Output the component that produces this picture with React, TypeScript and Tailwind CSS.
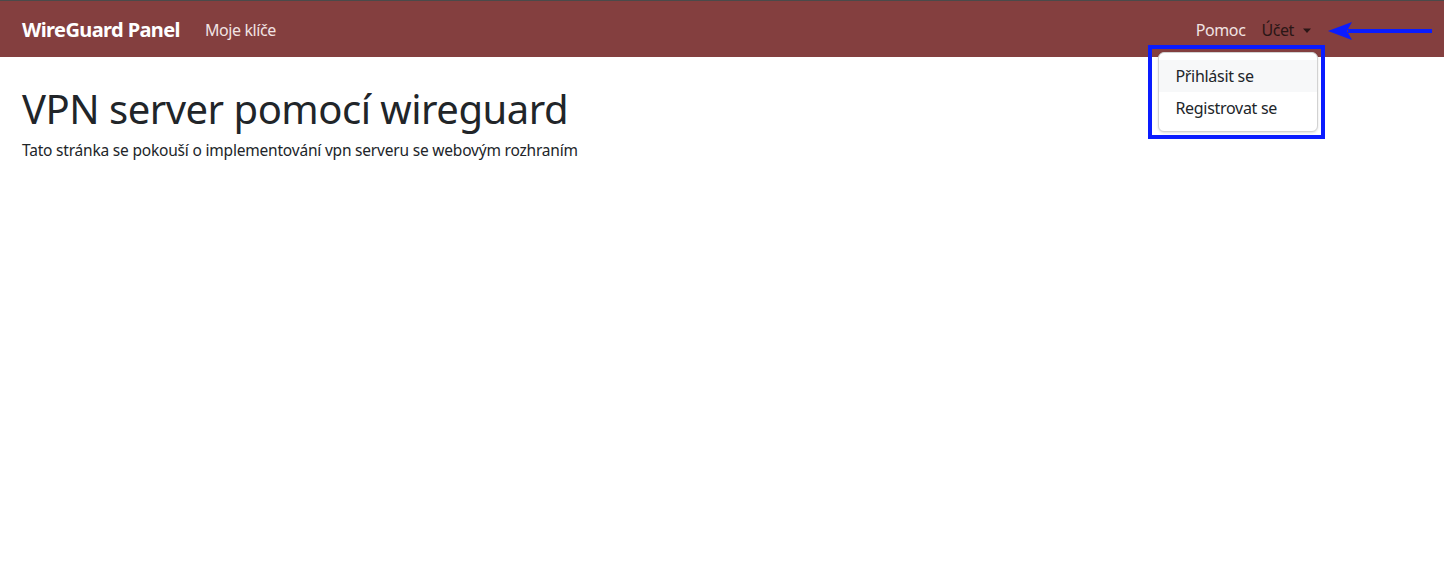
import React from "react";

const font = { fontFamily: '"Noto Sans", "Open Sans", sans-serif' };

function Caret() {
  return (
    <svg width="10" height="6" viewBox="0 0 10 6" className="ml-[8px] mt-[1px]">
      <path d="M1 0.5 L9 0.5 L5 5 Z" fill="currentColor" />
    </svg>
  );
}

export default function App() {
  return (
    <div className="min-h-[563px] bg-white text-[#212529]" style={font}>
      <nav className="relative h-[57px] border-t border-t-[#4a4a4a] bg-[#843f3f] flex items-center pt-[2px] pl-[22px] pr-[132px]">
        <span className="text-white text-[20px] font-bold tracking-[-0.6px]">WireGuard Panel</span>
        <span className="ml-[25px] text-[16px] tracking-[-0.4px] text-[#f1e3e3]">Moje klíče</span>
        <div className="ml-auto flex items-center text-[16px] tracking-[-0.4px]">
          <span className="text-[#f1e3e3]">Pomoc</span>
          <span className="relative ml-[16px] flex items-center text-[#2a1616]">
            Účet
            <Caret />
            {/* account dropdown */}
            <div className="absolute left-[-103px] top-[34px] w-[160px] rounded-[6px] border border-[#d2d2d2] bg-white py-[7px] shadow-sm tracking-[-0.3px]">
              <div className="px-[16px] h-[32px] flex items-center bg-[#f7f8f9] text-[#212529]">Přihlásit se</div>
              <div className="px-[16px] h-[32px] flex items-center text-[#212529]">Registrovat se</div>
            </div>
            {/* highlight frame around the menu */}
            <div className="absolute left-[-113px] top-[27px] w-[177px] h-[94px] border-[4px] border-[#0a1cff] pointer-events-none" />
          </span>
        </div>
        {/* pointer arrow */}
        <svg className="absolute right-[10px] top-[20px]" width="106" height="20" viewBox="0 0 106 20">
          <line x1="20" y1="10" x2="104" y2="10" stroke="#0a1cff" strokeWidth="4" />
          <path d="M0 10 L24 1 L19 10 L24 19 Z" fill="#0a1cff" />
        </svg>
      </nav>
      <main className="px-[22px] pt-[28px]">
        <h1 className="text-[40px] leading-[1.2] font-normal tracking-[-0.5px]">VPN server pomocí wireguard</h1>
        <p className="mt-[6px] text-[15.5px] tracking-[-0.2px]">Tato stránka se pokouší o implementování vpn serveru se webovým rozhraním</p>
      </main>
    </div>
  );
}
